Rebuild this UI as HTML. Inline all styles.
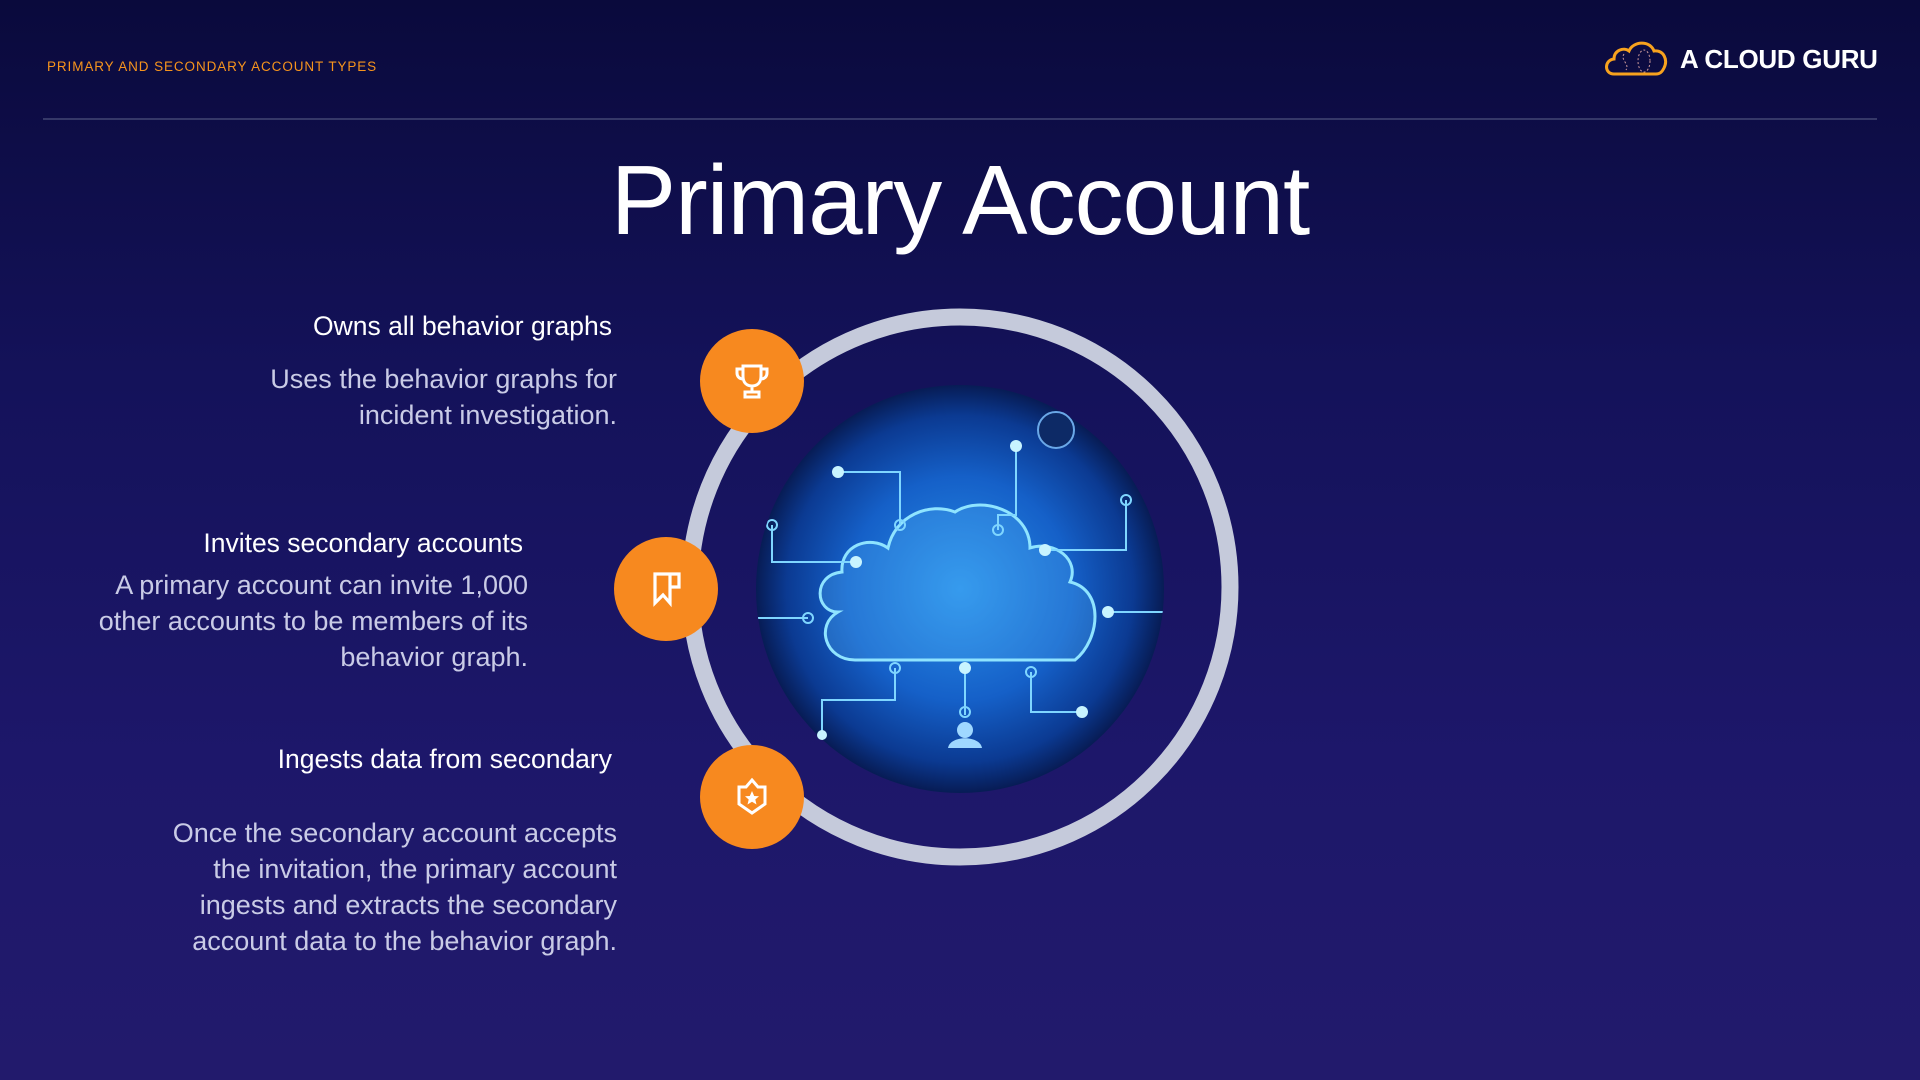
<!DOCTYPE html>
<html><head><meta charset="utf-8">
<style>
*{margin:0;padding:0;box-sizing:border-box}
body{width:1920px;height:1080px;overflow:hidden;font-family:"Liberation Sans",sans-serif;background:linear-gradient(180deg,#0a0a3c 0%,#14125a 35%,#1d176a 70%,#221a6c 100%);position:relative;color:#fff}
.hdr{position:absolute;left:47px;top:59px;font-size:13.5px;letter-spacing:0.9px;color:#f7941d}
.line{position:absolute;left:43px;top:118px;width:1834px;height:2px;background:#353868}
.logo{position:absolute;left:1680px;top:44px;font-size:26px;font-weight:bold;letter-spacing:-0.3px}
h1{position:absolute;left:0;width:1920px;text-align:center;top:144px;font-weight:normal;font-size:98px;letter-spacing:-1px}
.t{position:absolute;text-align:right;white-space:nowrap}
.h{font-size:26.5px;color:#fff}
.p{font-size:27px;color:#c9cbe6;line-height:36px}
.oc{position:absolute;width:104px;height:104px;border-radius:50%;background:#f7891f}
.oc svg{position:absolute;left:32px;top:32px}
</style></head><body>
<div class="hdr">PRIMARY AND SECONDARY ACCOUNT TYPES</div>
<div class="line"></div>
<svg style="position:absolute;left:1602px;top:38px" width="68" height="40" viewBox="0 0 68 40"><path d="M12 36 C2 36 2 22 12 21 C12 12 22 9 27 13 C31 3 48 2 52 13 C62 12 66 22 62 30 C60 34 58 36 54 36 Z" fill="none" stroke="#f7a21e" stroke-width="3"/><ellipse cx="42" cy="23" rx="6" ry="11" fill="none" stroke="#c99" stroke-width="1" stroke-dasharray="2 2"/><path d="M22 16 C18 22 28 26 24 32" fill="none" stroke="#c99" stroke-width="1" stroke-dasharray="2 2"/></svg>
<div class="logo">A CLOUD GURU</div>
<h1>Primary Account</h1>

<div class="t h" style="right:1308px;top:311px">Owns all behavior graphs</div>
<div class="t p" style="right:1303px;top:361px">Uses the behavior graphs for<br>incident investigation.</div>
<div class="t h" style="right:1397px;top:528px">Invites secondary accounts</div>
<div class="t p" style="right:1392px;top:567px">A primary account can invite 1,000<br>other accounts to be members of its<br>behavior graph.</div>
<div class="t h" style="right:1308px;top:744px">Ingests data from secondary</div>
<div class="t p" style="right:1303px;top:815px">Once the secondary account accepts<br>the invitation, the primary account<br>ingests and extracts the secondary<br>account data to the behavior graph.</div>

<svg style="position:absolute;left:0;top:0" width="1920" height="1080">
<defs>
<radialGradient id="g" cx="50%" cy="50%" r="50%"><stop offset="0" stop-color="#2a8fe8"/><stop offset="0.55" stop-color="#1560c8"/><stop offset="0.85" stop-color="#0b3a92"/><stop offset="1" stop-color="#071c55"/></radialGradient>
<clipPath id="c"><circle cx="960" cy="589" r="204"/></clipPath>
</defs>
<circle cx="960" cy="587" r="270" fill="none" stroke="#c5cadb" stroke-width="17"/>
<circle cx="960" cy="589" r="204" fill="url(#g)"/>
<g clip-path="url(#c)" stroke="#7fd6ff" stroke-width="2" fill="none">
<path d="M838 612 C815 612 812 575 842 572 C840 545 870 535 888 548 C895 515 930 502 955 512 C980 495 1030 510 1030 548 C1055 540 1080 560 1070 582 C1105 590 1100 640 1075 660 L855 660 C825 660 815 625 838 612 Z" stroke="#8fe4ff" stroke-width="3" fill="rgba(90,190,255,0.25)"/>
<path d="M838 472 H900 V525 M1016 446 V515 H998 V530 M1126 500 V550 H1045 M772 525 V562 H856 M1108 612 H1170 M750 618 H808 M895 668 V700 H822 V740 M965 668 V715 M1031 672 V712 H1082"/>
<circle cx="900" cy="525" r="5"/><circle cx="998" cy="530" r="5"/><circle cx="1126" cy="500" r="5"/><circle cx="772" cy="525" r="5"/><circle cx="808" cy="618" r="5"/><circle cx="895" cy="668" r="5"/><circle cx="965" cy="712" r="5"/><circle cx="1031" cy="672" r="5"/>
</g>
<g fill="#c8f4ff"><circle cx="838" cy="472" r="6"/><circle cx="1016" cy="446" r="6"/><circle cx="1045" cy="550" r="6"/><circle cx="856" cy="562" r="6"/><circle cx="1108" cy="612" r="6"/><circle cx="965" cy="668" r="6"/><circle cx="1082" cy="712" r="6"/><circle cx="822" cy="735" r="5"/></g>
<circle cx="1056" cy="430" r="18" fill="#0d2a66" stroke="#6aa8e8" stroke-width="2"/>
<circle cx="965" cy="730" r="8" fill="#9fd8ff"/><path d="M948 748 C950 735 980 735 982 748 Z" fill="#9fd8ff"/>
</svg>

<div class="oc" style="left:700px;top:329px"><svg width="40" height="40" viewBox="0 0 40 40" fill="none" stroke="#fff" stroke-width="3"><path d="M11 5 H29 V15 C29 22 25 25 20 25 C15 25 11 22 11 15 Z M11 8 H5 V12 C5 16 8 18 11 18 M29 8 H35 V12 C35 16 32 18 29 18 M20 25 V31 M13 36 H27 V31 H13 Z"/></svg></div>
<div class="oc" style="left:614px;top:537px"><svg width="40" height="40" viewBox="0 0 40 40" fill="none" stroke="#fff" stroke-width="3.2"><path d="M9 5 V34 L17 26 L24 34 V5 Z M24 5 H33 V18 H24"/></svg></div>
<div class="oc" style="left:700px;top:745px"><svg width="40" height="40" viewBox="0 0 40 40" fill="none" stroke="#fff" stroke-width="3"><path d="M20 3 L26 10 H33 V27 L20 36 L7 27 V10 H14 Z"/><path d="M20 14 L22.2 19 L27 19.3 L23.3 22.5 L24.5 27.5 L20 24.8 L15.5 27.5 L16.7 22.5 L13 19.3 L17.8 19 Z" fill="#fff" stroke="none"/></svg></div>
</body></html>
